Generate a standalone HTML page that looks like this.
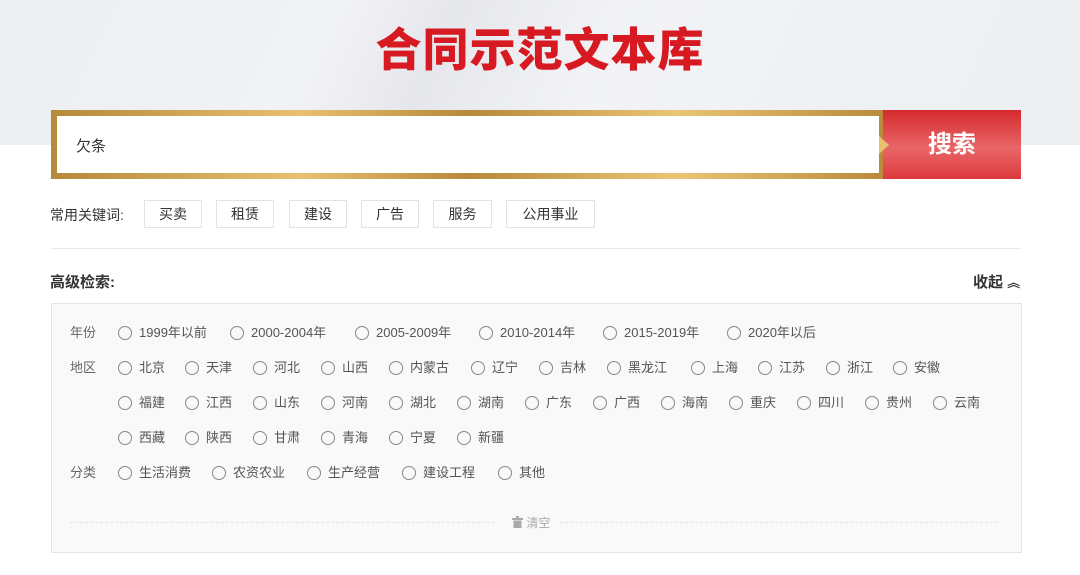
<!DOCTYPE html>
<html><head><meta charset="utf-8"><style>
*{margin:0;padding:0;box-sizing:border-box}
body{width:1080px;height:575px;background:#fff;font-family:"Liberation Sans","Noto Sans CJK SC",sans-serif;position:relative;overflow:hidden;color:#333}
.hdr{position:absolute;left:0;top:0;width:1080px;height:145px;background:linear-gradient(115deg,#eceef2 0%,#f1f2f6 30%,#e6e7ec 40%,#f2f3f6 55%,#eceef2 100%)}
.title{position:absolute;left:0;width:1080px;top:14px;text-align:center;font-size:46px;font-weight:900;color:#d71a21;letter-spacing:1px}
.sb{position:absolute;left:51px;top:110px;width:834px;height:69px;background:linear-gradient(90deg,#b58a3a,#e8c070 30%,#b8893a 50%,#e9c575 75%,#b98a3b);padding:6px}
.sb div{background:#fff;height:100%;font-size:15px;padding:19px 0 0 19px;color:#333}
.btn{position:absolute;left:883px;top:110px;width:138px;height:69px;background:linear-gradient(180deg,#d42a2e,#e96668 55%,#dc3a3d);color:#fff;font-size:24px;font-weight:bold;text-align:center;line-height:69px}
.arr{position:absolute;left:879px;top:136px;width:0;height:0;border-top:9px solid transparent;border-bottom:9px solid transparent;border-left:10px solid #e8c070}
.kw{position:absolute;top:200px;height:28px;border:1px solid #e3e3e3;font-size:14px;line-height:26px;text-align:center;color:#333}
.lbl{position:absolute;font-size:14px;color:#333}
.hr{position:absolute;left:51px;top:248px;width:970px;height:1px;background:#e8e8e8}
.panel{position:absolute;left:51px;top:303px;width:971px;height:250px;background:#f9f9f9;border:1px solid #e6e6e6}
.r{position:absolute;font-size:13px;color:#555;line-height:16px;white-space:nowrap}
.r i{display:inline-block;width:14px;height:14px;border:1px solid #888;border-radius:50%;vertical-align:-3px;margin-right:7px}
.rl{position:absolute;left:70px;font-size:13px;color:#666;line-height:16px}
.dash{position:absolute;top:522px;height:0;border-top:1px dashed #e3e3e3}
</style></head><body>
<div class="hdr"></div>
<div class="title">合同示范文本库</div>
<div class="sb"><div>欠条</div></div>
<div class="btn">搜索</div>
<div class="arr"></div>
<div class="lbl" style="left:50px;top:205px">常用关键词:</div>
<div class="kw" style="left:144px;width:58px">买卖</div>
<div class="kw" style="left:216px;width:58px">租赁</div>
<div class="kw" style="left:289px;width:58px">建设</div>
<div class="kw" style="left:361px;width:58px">广告</div>
<div class="kw" style="left:433px;width:59px">服务</div>
<div class="kw" style="left:506px;width:89px">公用事业</div>
<div class="hr"></div>
<div class="lbl" style="left:50px;top:271px;font-weight:bold;font-size:15px">高级检索:</div>
<div class="lbl" style="left:973px;top:271px;font-weight:bold;font-size:15px">收起 <span style="font-size:13px">︽</span></div>
<div class="panel"></div>
<div class="rl" style="top:325px">年份</div>
<div class="rl" style="top:360px">地区</div>
<div class="rl" style="top:465px">分类</div>
<div class="r" style="left:118px;top:325px"><i></i>1999年以前</div>
<div class="r" style="left:230px;top:325px"><i></i>2000-2004年</div>
<div class="r" style="left:355px;top:325px"><i></i>2005-2009年</div>
<div class="r" style="left:479px;top:325px"><i></i>2010-2014年</div>
<div class="r" style="left:603px;top:325px"><i></i>2015-2019年</div>
<div class="r" style="left:727px;top:325px"><i></i>2020年以后</div>
<div class="r" style="left:118px;top:360px"><i></i>北京</div>
<div class="r" style="left:185px;top:360px"><i></i>天津</div>
<div class="r" style="left:253px;top:360px"><i></i>河北</div>
<div class="r" style="left:321px;top:360px"><i></i>山西</div>
<div class="r" style="left:389px;top:360px"><i></i>内蒙古</div>
<div class="r" style="left:471px;top:360px"><i></i>辽宁</div>
<div class="r" style="left:539px;top:360px"><i></i>吉林</div>
<div class="r" style="left:607px;top:360px"><i></i>黑龙江</div>
<div class="r" style="left:691px;top:360px"><i></i>上海</div>
<div class="r" style="left:758px;top:360px"><i></i>江苏</div>
<div class="r" style="left:826px;top:360px"><i></i>浙江</div>
<div class="r" style="left:893px;top:360px"><i></i>安徽</div>
<div class="r" style="left:118px;top:395px"><i></i>福建</div>
<div class="r" style="left:185px;top:395px"><i></i>江西</div>
<div class="r" style="left:253px;top:395px"><i></i>山东</div>
<div class="r" style="left:321px;top:395px"><i></i>河南</div>
<div class="r" style="left:389px;top:395px"><i></i>湖北</div>
<div class="r" style="left:457px;top:395px"><i></i>湖南</div>
<div class="r" style="left:525px;top:395px"><i></i>广东</div>
<div class="r" style="left:593px;top:395px"><i></i>广西</div>
<div class="r" style="left:661px;top:395px"><i></i>海南</div>
<div class="r" style="left:729px;top:395px"><i></i>重庆</div>
<div class="r" style="left:797px;top:395px"><i></i>四川</div>
<div class="r" style="left:865px;top:395px"><i></i>贵州</div>
<div class="r" style="left:933px;top:395px"><i></i>云南</div>
<div class="r" style="left:118px;top:430px"><i></i>西藏</div>
<div class="r" style="left:185px;top:430px"><i></i>陕西</div>
<div class="r" style="left:253px;top:430px"><i></i>甘肃</div>
<div class="r" style="left:321px;top:430px"><i></i>青海</div>
<div class="r" style="left:389px;top:430px"><i></i>宁夏</div>
<div class="r" style="left:457px;top:430px"><i></i>新疆</div>
<div class="r" style="left:118px;top:465px"><i></i>生活消费</div>
<div class="r" style="left:212px;top:465px"><i></i>农资农业</div>
<div class="r" style="left:307px;top:465px"><i></i>生产经营</div>
<div class="r" style="left:402px;top:465px"><i></i>建设工程</div>
<div class="r" style="left:498px;top:465px"><i></i>其他</div>
<div class="dash" style="left:70px;width:425px"></div>
<div class="dash" style="left:560px;width:438px"></div>
<div class="r" style="left:512px;top:515px;color:#aaa;font-size:12px"><svg width="11" height="12" viewBox="0 0 11 12" style="vertical-align:-1px"><rect x="0" y="2" width="11" height="2" fill="#aaa"/><rect x="4" y="0" width="3" height="2" fill="#aaa"/><rect x="1.5" y="4.5" width="8" height="7.5" fill="#aaa"/></svg> 清空</div>
</body></html>
